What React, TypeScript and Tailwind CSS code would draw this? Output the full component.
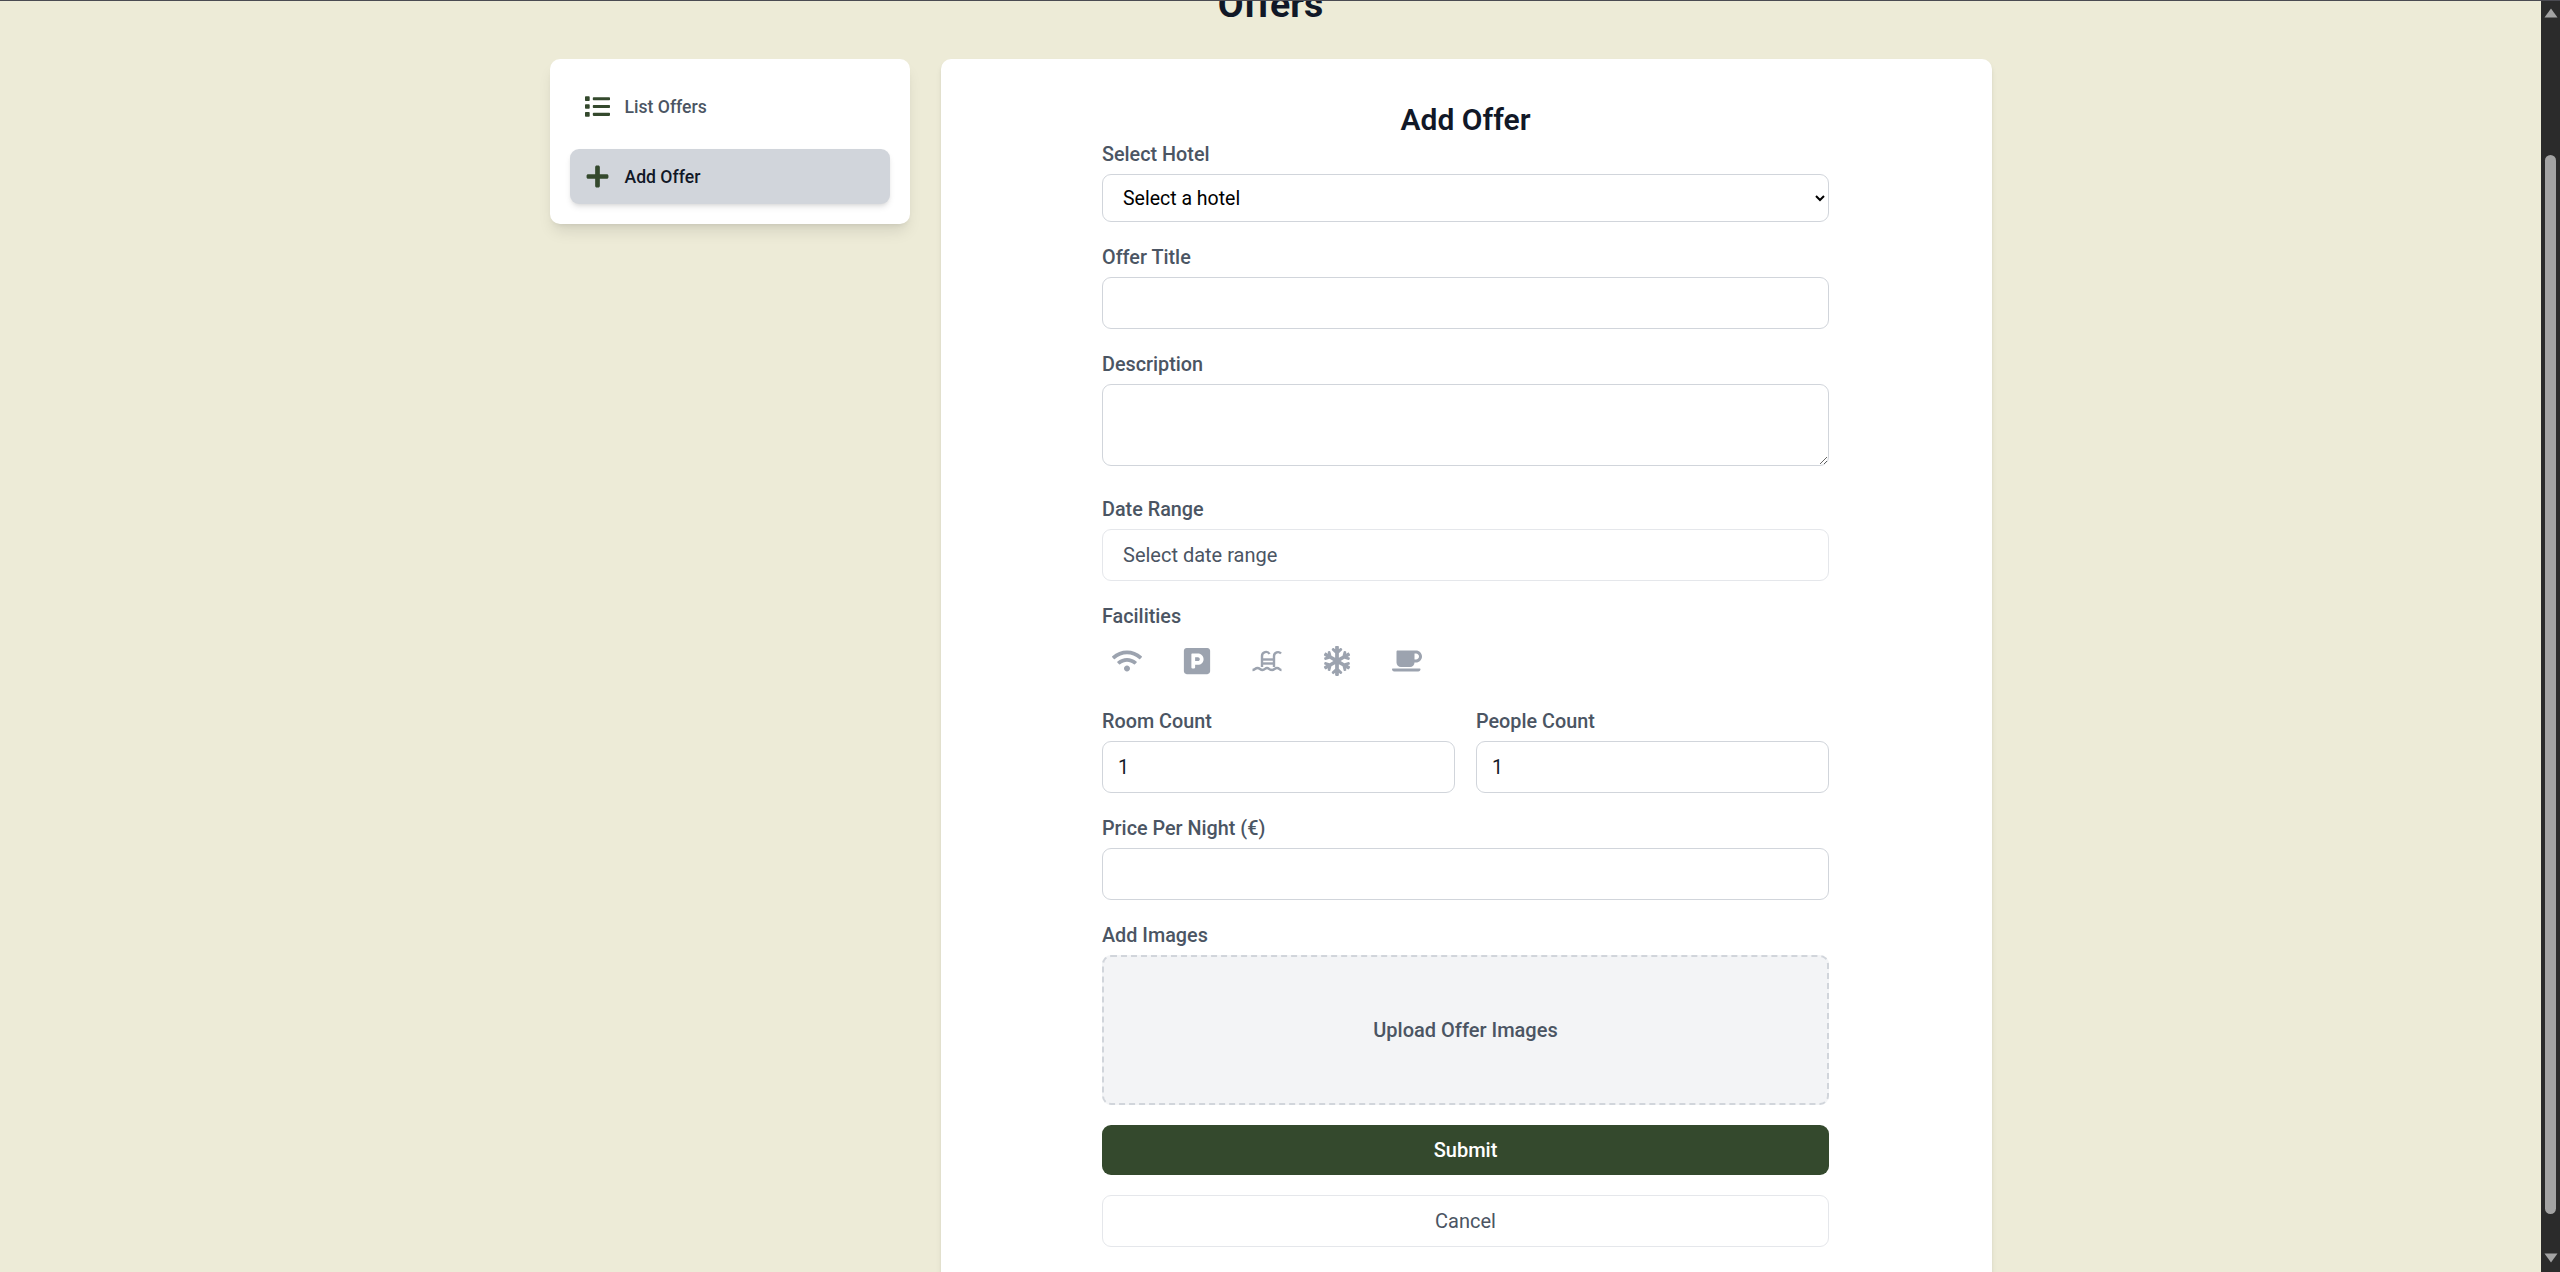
import { FaCoffee, FaList, FaParking, FaPlus, FaSnowflake, FaWifi } from "react-icons/fa";

const labelCls = "block text-[19.8px] leading-[30px] font-medium text-[#4b5563] mb-[4px]";
const inputCls =
  "block w-full h-[52px] px-[15px] rounded-[9px] border border-[#d1d5db] bg-white text-[19.5px] text-[#111827] outline-none";

function Field({ label, children, className = "" }: { label: string; children: React.ReactNode; className?: string }) {
  return (
    <div className={className}>
      <label className={labelCls}>{label}</label>
      {children}
    </div>
  );
}

function PoolIcon() {
  return (
    <svg width="30" height="22" viewBox="0 0 30 22" fill="none" stroke="currentColor" strokeWidth="2.4" className="shrink-0">
      <path d="M10 17V6a4 4 0 0 1 7.5-2" />
      <path d="M22 17V6a4 4 0 0 1 7-2.5" />
      <path d="M10 9.5h12" />
      <path d="M10 13.5h12" />
      <path d="M0.5 20c2.5 0 2.5-2 5-2s2.5 2 5 2 2.5-2 4.5-2 2.5 2 5 2 2.5-2 5-2 2.5 2 4.5 2" />
    </svg>
  );
}

function Scrollbar() {
  return (
    <div className="w-[19px] shrink-0 bg-[#2b2b2b] flex flex-col items-center">
      <svg width="14" height="10" viewBox="0 0 14 10" className="mt-[7px] shrink-0">
        <path d="M7 0.5 L13.5 9.5 L0.5 9.5 Z" fill="#a3a3a3" />
      </svg>
      <div className="mt-[137px] w-[11px] h-[1059px] rounded-full bg-[#a3a3a3] shrink-0" />
      <svg width="14" height="10" viewBox="0 0 14 10" className="mt-[39px] shrink-0">
        <path d="M0.5 0.5 L13.5 0.5 L7 9.5 Z" fill="#a3a3a3" />
      </svg>
    </div>
  );
}

export default function App() {
  return (
    <div className="h-screen flex flex-col overflow-hidden bg-[#edebd7] font-['Roboto',sans-serif]">
      <div className="h-px shrink-0 bg-[#4b4b52]" />
      <div className="flex flex-1 min-h-0">
        <div className="flex-1 min-w-0 overflow-hidden">
          <h1 className="-mt-[17px] h-[75px] text-center text-[37.5px] leading-[40px] font-bold text-[#111827]">Offers</h1>
          <div className="mx-auto w-[1442px] flex items-start gap-[31px]">
            <aside className="w-[360px] shrink-0 bg-white rounded-[10px] shadow-lg p-[20px] flex flex-col gap-[15px]">
              <a className="h-[55px] flex items-center pl-[15px] gap-[15px] text-[17.6px] font-medium text-[#4b5563]">
                <FaList className="w-[25px] h-[25px] text-[#34492d]" />
                <span className="pt-[1px]">List Offers</span>
              </a>
              <a className="h-[55px] flex items-center pl-[15px] gap-[15px] rounded-[9px] bg-[#d1d5db] shadow-md text-[17.6px] font-medium text-[#111827]">
                <FaPlus className="w-[25px] h-[25px] text-[#34492d]" />
                <span className="pt-[1px]">Add Offer</span>
              </a>
            </aside>
            <main className="flex-1 h-[1300px] bg-white rounded-[10px] shadow-md pt-[41px] pr-[1px]">
              <form className="w-[727px] mx-auto flex flex-col gap-[21px]">
                <div className="-mb-[21px]">
                  <h2 className="text-center text-[30px] leading-[39px] font-semibold text-[#111827]">Add Offer</h2>
                </div>
                <Field label="Select Hotel" className="pt-[1px]">
                  <select className="block w-full h-[48px] pl-[16px] pr-[6px] rounded-[9px] border border-[#d1d5db] bg-white text-[19.5px] text-black">
                    <option>Select a hotel</option>
                  </select>
                </Field>
                <Field label="Offer Title">
                  <input className={inputCls} />
                </Field>
                <Field label="Description">
                  <textarea className="w-full h-[82px] mb-[1px] px-[15px] py-[8px] rounded-[9px] border border-[#d1d5db] bg-white text-[19.5px] outline-none" />
                </Field>
                <Field label="Date Range">
                  <input
                    className="block w-full h-[52px] px-[20px] rounded-[9px] border border-[#e5e7eb] bg-white text-[20px] outline-none placeholder:text-[#4b5563]"
                    placeholder="Select date range"
                  />
                </Field>
                <div>
                  <label className={labelCls}>Facilities</label>
                  <div className="h-[50px] flex items-center gap-[40px] pl-[10px] text-[#9ca3af]">
                    <span className="w-[30px] flex justify-center"><FaWifi className="w-[30px] h-[30px]" /></span>
                    <span className="w-[30px] flex justify-center"><FaParking className="w-[30px] h-[30px]" /></span>
                    <span className="w-[30px] flex justify-center"><PoolIcon /></span>
                    <span className="w-[30px] flex justify-center"><FaSnowflake className="w-[30px] h-[30px]" /></span>
                    <span className="w-[30px] flex justify-center"><FaCoffee className="w-[30px] h-[30px]" /></span>
                  </div>
                </div>
                <div className="grid grid-cols-2 gap-[21px]">
                  <Field label="Room Count">
                    <input className={inputCls} defaultValue="1" />
                  </Field>
                  <Field label="People Count">
                    <input className={inputCls} defaultValue="1" />
                  </Field>
                </div>
                <Field label="Price Per Night (€)">
                  <input className={inputCls} />
                </Field>
                <Field label="Add Images">
                  <div className="h-[150px] flex items-center justify-center rounded-[9px] border-2 border-dashed border-[#d1d5db] bg-[#f3f4f6] text-[20px] font-medium text-[#4b5563]">
                    Upload Offer Images
                  </div>
                </Field>
                <div className="flex flex-col gap-[20px] -mt-[1px]">
                  <button type="button" className="h-[50px] rounded-[9px] bg-[#34492d] text-white text-[20px] font-medium">
                    Submit
                  </button>
                  <button type="button" className="h-[52px] rounded-[9px] border border-[#e5e7eb] bg-white text-[#4b5563] text-[20px]">
                    Cancel
                  </button>
                </div>
              </form>
            </main>
          </div>
        </div>
        <Scrollbar />
      </div>
    </div>
  );
}
